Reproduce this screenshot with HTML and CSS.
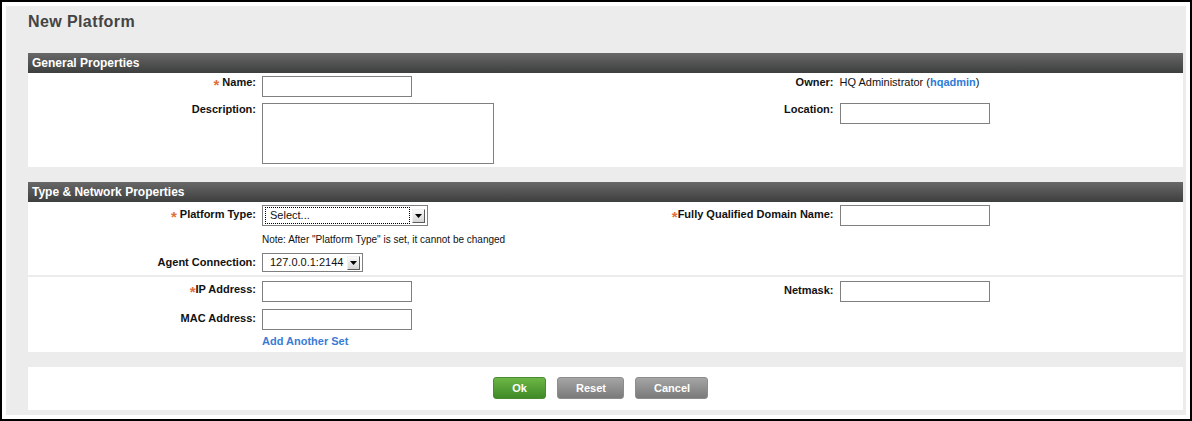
FILE: index.html
```html
<!DOCTYPE html>
<html lang="en">
<head>
<meta charset="utf-8">
<title>New Platform</title>
<link rel="stylesheet" href="styles.css">
</head>
<body>
<div class="frame">
  <div class="panel">
    <h1 class="title">New Platform</h1>

    <section class="section">
      <div class="section-head">General Properties</div>
      <table class="form">
        <colgroup><col class="c-lbl"><col class="c-val"><col class="c-lbl"><col class="c-val"></colgroup>
        <tr>
          <td class="lbl"><span class="req">*</span> Name:</td>
          <td class="val"><input class="text" type="text"></td>
          <td class="lbl">Owner:</td>
          <td class="val"><span class="plain">HQ Administrator (<a class="owner-link">hqadmin</a>)</span></td>
        </tr>
        <tr>
          <td class="lbl">Description:</td>
          <td class="val"><textarea class="area"></textarea></td>
          <td class="lbl">Location:</td>
          <td class="val"><input class="text" type="text"></td>
        </tr>
      </table>
    </section>

    <section class="section gap">
      <div class="section-head">Type &amp; Network Properties</div>
      <table class="form net">
        <colgroup><col class="c-lbl"><col class="c-val"><col class="c-lbl"><col class="c-val"></colgroup>
        <tr>
          <td class="lbl"><span class="req">*</span> Platform Type:</td>
          <td class="val">
            <div class="select select-wide">
              <span class="select-text focus">Select...</span>
              <span class="select-btn"><svg width="7" height="4" viewBox="0 0 7 4"><path d="M0 0h7L3.5 4z" fill="#000"/></svg></span>
            </div>
          </td>
          <td class="lbl"><span class="req">*</span>Fully Qualified Domain Name:</td>
          <td class="val"><input class="text" type="text"></td>
        </tr>
        <tr>
          <td class="lbl"></td>
          <td class="val note">Note: After "Platform Type" is set, it cannot be changed</td>
          <td class="lbl"></td>
          <td class="val"></td>
        </tr>
        <tr>
          <td class="lbl">Agent Connection:</td>
          <td class="val">
            <div class="select select-agent">
              <span class="select-text">127.0.0.1:2144</span>
              <span class="select-btn"><svg width="7" height="4" viewBox="0 0 7 4"><path d="M0 0h7L3.5 4z" fill="#000"/></svg></span>
            </div>
          </td>
          <td class="lbl"></td>
          <td class="val"></td>
        </tr>
        <tr class="sep"><td colspan="4"></td></tr>
        <tr class="r-addr">
          <td class="lbl"><span class="req">*</span>IP Address:</td>
          <td class="val"><input class="text" type="text"></td>
          <td class="lbl">Netmask:</td>
          <td class="val"><input class="text" type="text"></td>
        </tr>
        <tr class="r-addr">
          <td class="lbl">MAC Address:</td>
          <td class="val"><input class="text" type="text"></td>
          <td class="lbl"></td>
          <td class="val"></td>
        </tr>
        <tr>
          <td class="lbl"></td>
          <td class="val add"><a class="add-link">Add Another Set</a></td>
          <td class="lbl"></td>
          <td class="val"></td>
        </tr>
      </table>
    </section>

    <div class="actions">
      <button class="btn btn-ok" type="button">Ok</button>
      <button class="btn btn-grey" type="button">Reset</button>
      <button class="btn btn-grey" type="button">Cancel</button>
    </div>
  </div>
</div>
</body>
</html>
```

FILE: styles.css
```css
html, body {
  margin: 0;
  padding: 0;
  background: #fff;
}

body {
  font-family: "Liberation Sans", Arial, sans-serif;
  color: #111;
}

.frame {
  width: 1192px;
  height: 421px;
  box-sizing: border-box;
  border: 2px solid #000;
  padding: 4px;
  background: #fff;
}

.panel {
  height: 100%;
  box-sizing: border-box;
  background: #ececec;
  padding: 6px 3px 0 22px;
}

.title {
  margin: 0 0 21px;
  font-size: 16px;
  line-height: 20px;
  font-weight: bold;
  letter-spacing: 0.4px;
  color: #444;
}

.section.gap {
  margin-top: 15px;
}

.section-head {
  height: 20px;
  line-height: 20px;
  padding-left: 4px;
  font-size: 12px;
  font-weight: bold;
  color: #fff;
  background: linear-gradient(#686868, #3d3e3e);
}

.form {
  width: 100%;
  table-layout: fixed;
  border-collapse: collapse;
  border-spacing: 0;
  background: #fff;
}

.c-lbl { width: 20%; }
.c-val { width: 30%; }

.lbl {
  text-align: right;
  font-size: 11px;
  line-height: 13px;
  font-weight: bold;
  color: #111;
  padding: 3px 3px 0 0;
  vertical-align: top;
  white-space: nowrap;
}

.net .lbl {
  vertical-align: middle;
  padding: 0 3px 1px 0;
}

.val {
  padding: 3px 0 3px 3px;
  vertical-align: top;
  font-size: 11px;
  line-height: 13px;
}

.req {
  color: #e2703a;
  font-size: 15px;
  line-height: 13px;
  vertical-align: -4px;
}

.plain {
  color: #111;
}

.owner-link {
  color: #2f7bd6;
  font-weight: bold;
}

.text {
  display: block;
  width: 150px;
  height: 21px;
  box-sizing: border-box;
  border: 1px solid #808080;
  padding: 0 3px;
  margin: 0;
  background: #fff;
}

.area {
  display: block;
  width: 232px;
  height: 61px;
  box-sizing: border-box;
  border: 1px solid #808080;
  padding: 0;
  margin: 0;
  resize: none;
  background: #fff;
}

.select {
  display: flex;
  align-items: center;
  box-sizing: border-box;
  border: 1px solid #808080;
  background: #fff;
  padding: 0 2px;
  font-size: 11px;
  color: #111;
}

.select-wide {
  width: 166px;
  height: 21px;
}

.select-agent {
  width: 101px;
  height: 19px;
}

.select-text {
  flex: 1;
  height: 17px;
  line-height: 17px;
  padding-left: 5px;
  box-sizing: border-box;
  white-space: nowrap;
  overflow: hidden;
}

.select-text.focus {
  outline: 1px dotted #000;
  outline-offset: -1px;
}

.select-btn {
  width: 13px;
  height: 14px;
  margin-left: 2px;
  box-sizing: border-box;
  display: flex;
  align-items: center;
  justify-content: center;
  background: linear-gradient(#fafafa, #d6d6d6);
  border: 1px solid;
  border-color: #f0f0f0 #5a5a5a #5a5a5a #f0f0f0;
}

.select-btn svg {
  display: block;
}

.note {
  font-size: 10px;
  line-height: 12px;
  padding: 5px 0 4px 3px;
  white-space: nowrap;
}

.sep td {
  height: 2px;
  padding: 0;
  font-size: 0;
  line-height: 0;
  background: #ececec;
}

.r-addr .val {
  padding-top: 4px;
}

.add {
  padding: 2px 0 4px 3px;
}

.add-link {
  color: #3a7bd5;
  font-weight: bold;
  font-size: 11px;
}

.actions {
  margin-top: 15px;
  height: 43px;
  box-sizing: border-box;
  background: #fff;
  display: flex;
  justify-content: center;
  align-items: flex-start;
  gap: 11px;
  padding: 10px 10px 0 0;
}

.btn {
  height: 22px;
  box-sizing: border-box;
  padding: 0 18px;
  border-radius: 3px;
  font-family: "Liberation Sans", Arial, sans-serif;
  font-size: 11px;
  font-weight: bold;
  color: #fff;
  line-height: 20px;
  cursor: pointer;
}

.btn-ok {
  width: 53px;
  background: linear-gradient(#6db646, #3f8a26);
  border: 1px solid #4a8a30;
}

.btn-grey {
  background: linear-gradient(#a5a5a5, #7a7a7a);
  border: 1px solid #8c8c8c;
}

.btn-grey:nth-child(2) { width: 67px; }
.btn-grey:nth-child(3) { width: 73px; }
```
